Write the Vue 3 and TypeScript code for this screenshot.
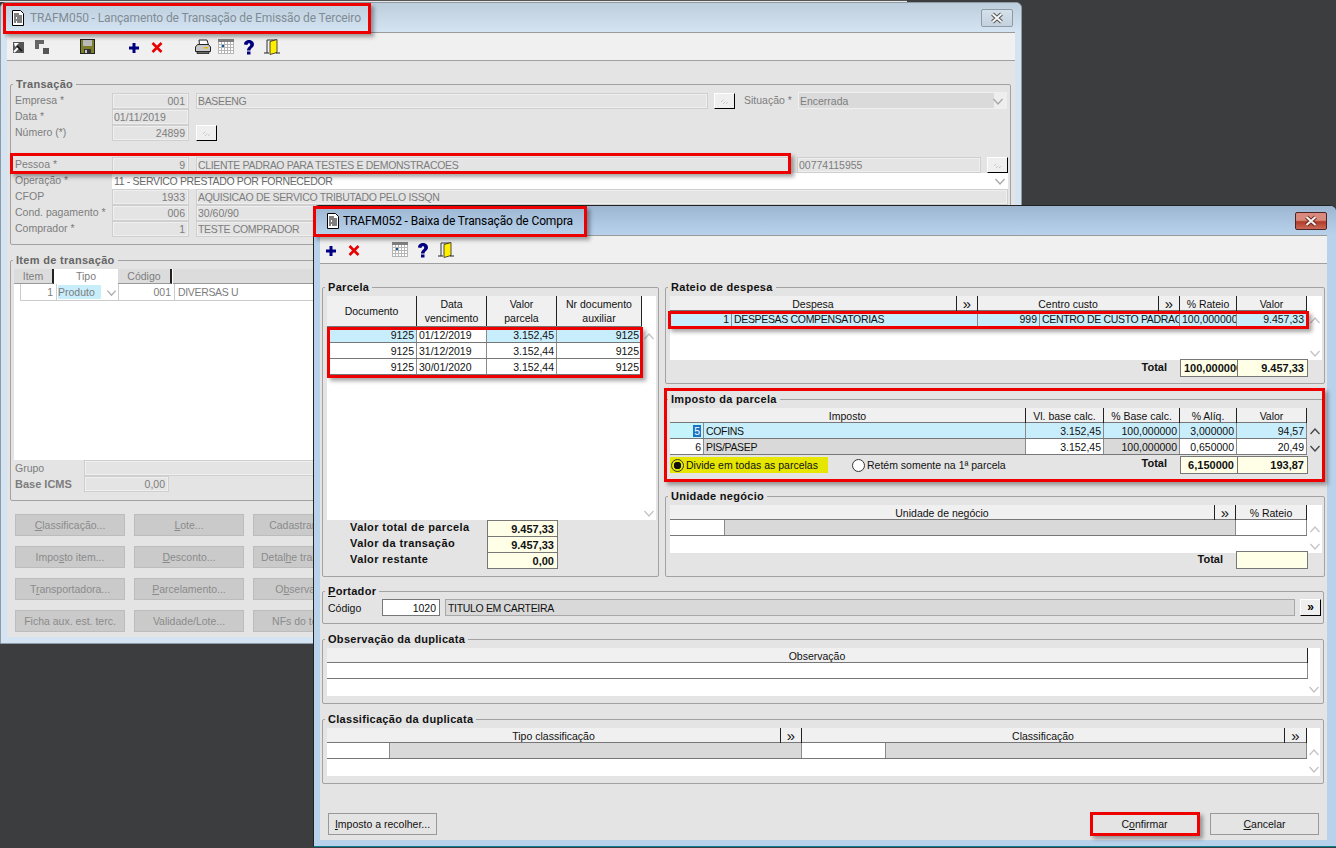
<script setup lang="ts">
interface Cell {
  t: string
  c?: string
}

interface DisabledBtn {
  pre: string
  key: string
  post: string
}

const cell = (t: string, c = ''): Cell => ({ t, c })

// janela de trás
const itemHeader = ['Item', 'Tipo', 'Código', 'Descrição']
const backButtons: DisabledBtn[] = [
  { pre: '', key: 'C', post: 'lassificação...' },
  { pre: '', key: 'L', post: 'ote...' },
  { pre: 'Cadastrar ', key: 'i', post: 'tem...' },
  { pre: 'Impo', key: 's', post: 'to item...' },
  { pre: '', key: 'D', post: 'esconto...' },
  { pre: 'Detal', key: 'h', post: 'e transação...' },
  { pre: 'T', key: 'r', post: 'ansportadora...' },
  { pre: '', key: 'P', post: 'arcelamento...' },
  { pre: 'O', key: 'b', post: 'servação...' },
  { pre: 'Ficha aux. est. terc.', key: '', post: '' },
  { pre: 'Validade/Lote...', key: '', post: '' },
  { pre: 'NFs do terceiro', key: '', post: '' }
]

// janela da frente
const parcelaHeader = [
  ['Documento'],
  ['Data', 'vencimento'],
  ['Valor', 'parcela'],
  ['Nr documento', 'auxiliar']
]
const parcelaRows: Cell[][] = [
  [cell('9125', 'r sel'), cell('01/12/2019', 'l'), cell('3.152,45', 'r sel'), cell('9125', 'r sel')],
  [cell('9125', 'r'), cell('31/12/2019', 'l'), cell('3.152,44', 'r'), cell('9125', 'r')],
  [cell('9125', 'r'), cell('30/01/2020', 'l'), cell('3.152,44', 'r'), cell('9125', 'r')]
]
const parcelaTotals = [
  ['Valor total de parcela', '9.457,33'],
  ['Valor da transação', '9.457,33'],
  ['Valor restante', '0,00']
]

const rateioRow: Cell[] = [
  cell('1', 'r sel'),
  cell('DESPESAS COMPENSATORIAS', 'l sel caps'),
  cell('999', 'r sel'),
  cell('CENTRO DE CUSTO PADRAO', 'l sel caps'),
  cell('100,000000', 'l sel'),
  cell('9.457,33', 'r sel')
]
const impostoRows: Cell[][] = [
  [
    cell('COFINS', 'l sel caps'),
    cell('3.152,45', 'r sel'),
    cell('100,000000', 'r sel'),
    cell('3,000000', 'r sel'),
    cell('94,57', 'r sel')
  ],
  [
    cell('PIS/PASEP', 'l ro caps'),
    cell('3.152,45', 'r'),
    cell('100,000000', 'r ro'),
    cell('0,650000', 'r'),
    cell('20,49', 'r')
  ]
]
</script>

<template>
  <div class="desktop">
    <svg class="defs" width="0" height="0">
      <symbol id="i-doc" viewBox="0 0 16 16">
        <path d="M2.5.5h8l3 3v12h-11z" fill="#fff" stroke="#000" />
        <path d="M4 4h5M4 6h8M4 8h2M7 8h5M4 10h8M4 12h2M7 12h5" stroke="#000" stroke-width="1.2" />
      </symbol>
      <symbol id="i-plus" viewBox="0 0 16 16">
        <path d="M6.5 4h3v3.500h3.500v3h-3.500v3.500h-3v-3.500h-3.500v-3h3.500z" fill="#000080" />
      </symbol>
      <symbol id="i-x" viewBox="0 0 16 16">
        <path d="M3.500 4l9 9M12.500 4l-9 9" stroke="#e80000" stroke-width="2.600" />
      </symbol>
      <symbol id="i-cal" viewBox="0 0 16 16">
        <rect width="16" height="15" fill="#fff" />
        <rect width="16" height="3" fill="#7f7f7f" />
        <path d="M.5 3v12M3.500 3v12M6.500 3v12M9.500 3v12M12.500 3v12M15.500 3v12M0 5.500h16M0 8.500h16M0 11.500h16M0 14.500h16" stroke="#b5b5b5" />
        <rect x="4" y="6" width="2" height="2" fill="#0a5a9c" />
      </symbol>
      <symbol id="i-help" viewBox="0 0 16 16">
        <path d="M3 5.500c0-6 10-6 10 0 0 3-3.500 3.500-3.500 6h-3.500c0-3.500 3.200-3.800 3.200-5.800 0-2-2.700-2-2.700.3z" fill="#000080" />
        <rect x="6" y="12.500" width="3.500" height="3" fill="#000080" />
      </symbol>
      <symbol id="i-door" viewBox="0 0 16 16">
        <path d="M3 14V1h9v13" fill="none" stroke="#333" />
        <path d="M6 2.500l7-2v13l-7 2z" fill="#ffee00" stroke="#222" stroke-width=".8" />
        <path d="M0 14h5M12 14h4" stroke="#222" />
      </symbol>
      <symbol id="i-print" viewBox="0 0 16 16">
        <path d="M4 1h8l1.500 5h-9z" fill="#fff" stroke="#222" />
        <path d="M.5 8l2-2.500h11l2 2.500v4.500h-15z" fill="#c8c8c8" stroke="#222" />
        <path d="M2 12.500h12v2h-12z" fill="#666" stroke="#222" stroke-width=".8" />
        <rect x="9" y="8" width="4" height="1.500" fill="#e0c000" />
      </symbol>
      <symbol id="i-save" viewBox="0 0 16 16">
        <rect x=".5" y=".5" width="14" height="14" fill="#7d7d2a" stroke="#222" />
        <rect x="3" y="1" width="9" height="6" fill="#b9b9b9" />
        <rect x="4" y="10" width="7" height="4.500" fill="#333" />
        <rect x="5" y="11" width="2" height="3" fill="#ccc" />
      </symbol>
      <symbol id="i-expand" viewBox="0 0 16 16">
        <rect x="2" y="3" width="11" height="11" fill="#555" />
        <path d="M3 13l4-4" stroke="#fff" stroke-width="2" />
        <path d="M3 4h5L4 8z" fill="#fff" />
        <path d="M6 7l5 5" stroke="#111" stroke-width="1.500" />
      </symbol>
      <symbol id="i-windows" viewBox="0 0 16 16">
        <rect x="1" y="1" width="9" height="9" fill="#666" />
        <rect x="5" y="5" width="5" height="5" fill="#eee" />
        <rect x="9" y="9" width="6" height="6" fill="#555" />
      </symbol>
      <symbol id="i-dots" viewBox="0 0 10 10">
        <path d="M1 6l3-3M3 8l3-3M6 8l2-2" stroke="#b5b5b5" stroke-dasharray="1 1" />
      </symbol>
      <symbol id="i-down" viewBox="0 0 12 12">
        <path d="M1.500 4l4.500 5 4.500-5" fill="none" stroke="currentColor" stroke-width="1.300" />
      </symbol>
      <symbol id="i-up" viewBox="0 0 12 12">
        <path d="M1.500 8l4.500-5 4.500 5" fill="none" stroke="currentColor" stroke-width="1.300" />
      </symbol>
      <symbol id="i-close" viewBox="0 0 14 12">
        <path d="M2.500 2l9 8M11.500 2l-9 8" stroke="currentColor" stroke-width="4" />
        <path d="M2.500 2l9 8M11.500 2l-9 8" stroke="#f6f6f6" stroke-width="2" />
      </symbol>
    </svg>

    <div class="topline"></div>

    <!-- TRAFM050 -->
    <section class="window back">
      <header class="titlebar">
        <svg class="doc"><use href="#i-doc" /></svg>
        <span class="title">TRAFM050 - Lançamento de Transação de Emissão de Terceiro</span>
        <button class="close"><svg><use href="#i-close" /></svg></button>
      </header>
      <div class="win-body">
        <div class="toolbar">
          <svg><use href="#i-expand" /></svg>
          <svg><use href="#i-windows" /></svg>
          <i class="slot"></i>
          <svg><use href="#i-save" /></svg>
          <i class="slot"></i>
          <svg><use href="#i-plus" /></svg>
          <svg><use href="#i-x" /></svg>
          <i class="slot"></i>
          <svg><use href="#i-print" /></svg>
          <svg><use href="#i-cal" /></svg>
          <svg><use href="#i-help" /></svg>
          <svg><use href="#i-door" /></svg>
        </div>
        <div class="back-client">
          <fieldset class="group g-transacao">
            <legend>Transação</legend>
            <div class="frow">
              <label>Empresa *</label>
              <span class="fld code">001</span>
              <span class="fld txt w-empresa caps">BASEENG</span>
              <button class="dots"><svg><use href="#i-dots" /></svg></button>
              <label class="lb-situacao">Situação *</label>
              <span class="combo situacao">Encerrada<svg><use href="#i-down" /></svg></span>
            </div>
            <div class="frow">
              <label>Data *</label>
              <span class="fld code left">01/11/2019</span>
            </div>
            <div class="frow">
              <label>Número (*)</label>
              <span class="fld code">24899</span>
              <button class="dots wide-gap"><svg><use href="#i-dots" /></svg></button>
            </div>
            <div class="frow spaced">
              <label>Pessoa *</label>
              <span class="fld code">9</span>
              <span class="fld txt w-pessoa caps">CLIENTE PADRAO PARA TESTES E DEMONSTRACOES</span>
              <span class="fld txt w-cpf">00774115955</span>
              <button class="dots"><svg><use href="#i-dots" /></svg></button>
            </div>
            <div class="frow">
              <label>Operação *</label>
              <span class="combo operacao caps">11 - SERVICO PRESTADO POR FORNECEDOR<svg><use href="#i-down" /></svg></span>
            </div>
            <div class="frow">
              <label>CFOP</label>
              <span class="fld code">1933</span>
              <span class="fld txt w-long caps">AQUISICAO DE SERVICO TRIBUTADO PELO ISSQN</span>
            </div>
            <div class="frow">
              <label>Cond. pagamento *</label>
              <span class="fld code">006</span>
              <span class="fld txt w-long">30/60/90</span>
            </div>
            <div class="frow">
              <label>Comprador *</label>
              <span class="fld code">1</span>
              <span class="fld txt w-long caps">TESTE COMPRADOR</span>
            </div>
          </fieldset>

          <fieldset class="group g-item">
            <legend>Item de transação</legend>
            <div class="item-table">
              <div class="item-head">
                <span v-for="h in itemHeader" :key="h" :class="{ 'tipo-h': h === 'Tipo' }">{{ h }}</span>
              </div>
              <div class="item-row">
                <span class="r">1</span>
                <span class="tipo"><em>Produto</em><svg><use href="#i-down" /></svg></span>
                <span class="r">001</span>
                <span class="l caps">DIVERSAS U</span>
              </div>
            </div>
            <div class="frow short">
              <label>Grupo</label>
              <span class="fld w-grupo"></span>
            </div>
            <div class="frow short">
              <label class="strong">Base ICMS</label>
              <span class="fld base">0,00</span>
            </div>
          </fieldset>

          <div class="back-buttons">
            <button v-for="b in backButtons" :key="b.pre + b.post" class="off-btn">{{ b.pre }}<u>{{ b.key }}</u>{{ b.post }}</button>
          </div>
        </div>
      </div>
    </section>

    <!-- TRAFM052 -->
    <section class="window front">
      <header class="titlebar">
        <svg class="doc"><use href="#i-doc" /></svg>
        <span class="title">TRAFM052 - Baixa de Transação de Compra</span>
        <button class="close"><svg><use href="#i-close" /></svg></button>
      </header>
      <div class="win-body">
        <div class="toolbar">
          <svg><use href="#i-plus" /></svg>
          <svg><use href="#i-x" /></svg>
          <i class="slot"></i>
          <svg><use href="#i-cal" /></svg>
          <svg><use href="#i-help" /></svg>
          <svg><use href="#i-door" /></svg>
        </div>
        <div class="front-client">
          <div class="columns">
            <fieldset class="group g-parcela">
              <legend>Parcela</legend>
              <div class="grid-wrap parcela-wrap">
                <div>
                  <div class="head cols-parcela tall">
                    <span v-for="h in parcelaHeader" :key="h[0]">
                      <b v-for="line in h" :key="line">{{ line }}</b>
                    </span>
                  </div>
                  <div v-for="(row, i) in parcelaRows" :key="i" class="row cols-parcela">
                    <span v-for="(c, j) in row" :key="j" :class="c.c">{{ c.t }}</span>
                  </div>
                </div>
                <div class="scroll tall-scroll">
                  <svg><use href="#i-up" /></svg>
                  <svg><use href="#i-down" /></svg>
                </div>
              </div>
              <div v-for="t in parcelaTotals" :key="t[0]" class="sum-row">
                <span>{{ t[0] }}</span>
                <span class="total-box">{{ t[1] }}</span>
              </div>
            </fieldset>

            <div class="right-col">
              <fieldset class="group g-rateio">
                <legend>Rateio de despesa</legend>
                <div class="grid-wrap rateio-wrap">
                  <div>
                    <div class="head cols-rateio-h">
                      <span>Despesa</span><span class="ext">»</span><span>Centro custo</span><span class="ext">»</span><span>% Rateio</span><span>Valor</span>
                    </div>
                    <div class="row cols-rateio">
                      <span v-for="(c, j) in rateioRow" :key="j" :class="c.c">{{ c.t }}</span>
                    </div>
                  </div>
                  <div class="scroll body-scroll">
                    <svg><use href="#i-up" /></svg>
                    <svg><use href="#i-down" /></svg>
                  </div>
                </div>
                <div class="total-row">
                  <strong>Total</strong>
                  <span class="total-box pct">100,000000</span>
                  <span class="total-box val">9.457,33</span>
                </div>
              </fieldset>

              <fieldset class="group g-imposto">
                <legend>Imposto da parcela</legend>
                <div class="grid-wrap imposto-wrap">
                  <div>
                    <div class="head cols-imposto-h">
                      <span>Imposto</span><span>Vl. base calc.</span><span>% Base calc.</span><span>% Alíq.</span><span>Valor</span>
                    </div>
                    <div class="row cols-imposto">
                      <span class="r editing"><mark>5</mark></span>
                      <span v-for="(c, j) in impostoRows[0]" :key="j" :class="c.c">{{ c.t }}</span>
                    </div>
                    <div class="row cols-imposto">
                      <span class="r">6</span>
                      <span v-for="(c, j) in impostoRows[1]" :key="j" :class="c.c">{{ c.t }}</span>
                    </div>
                  </div>
                  <div class="scroll active-scroll">
                    <svg><use href="#i-up" /></svg>
                    <svg><use href="#i-down" /></svg>
                  </div>
                </div>
                <div class="total-row imposto-total">
                  <label class="radio on"><i></i>Divide em todas as parcelas</label>
                  <label class="radio"><i></i>Retém somente na 1ª parcela</label>
                  <strong>Total</strong>
                  <span class="total-box pct">6,150000</span>
                  <span class="total-box val">193,87</span>
                </div>
              </fieldset>

              <fieldset class="group g-unidade">
                <legend>Unidade negócio</legend>
                <div class="grid-wrap unidade-wrap">
                  <div>
                    <div class="head cols-unidade-h">
                      <span>Unidade de negócio</span><span class="ext">»</span><span>% Rateio</span>
                    </div>
                    <div class="row cols-unidade">
                      <span></span><span class="ro"></span><span></span>
                    </div>
                  </div>
                  <div class="scroll body-scroll">
                    <svg><use href="#i-up" /></svg>
                    <svg><use href="#i-down" /></svg>
                  </div>
                </div>
                <div class="total-row unidade-total">
                  <strong>Total</strong>
                  <span class="total-box wide"></span>
                </div>
              </fieldset>
            </div>
          </div>

          <fieldset class="group g-portador">
            <legend><u>P</u>ortador</legend>
            <div class="portador-row">
              <label>Código</label>
              <span class="input">1020</span>
              <span class="ro-field caps">TITULO EM CARTEIRA</span>
              <button class="more">»</button>
            </div>
          </fieldset>

          <fieldset class="group g-obs">
            <legend>Observação da duplicata</legend>
            <div class="grid-wrap full-wrap">
              <div>
                <div class="head cols-obs"><span>Observação</span></div>
                <div class="row cols-obs"><span></span></div>
              </div>
              <div class="scroll down-only">
                <svg><use href="#i-down" /></svg>
              </div>
            </div>
          </fieldset>

          <fieldset class="group g-class">
            <legend>Classificação da duplicata</legend>
            <div class="grid-wrap full-wrap">
              <div>
                <div class="head cols-class-h">
                  <span>Tipo classificação</span><span class="ext">»</span><span>Classificação</span><span class="ext">»</span>
                </div>
                <div class="row cols-class">
                  <span></span><span class="ro"></span><span></span><span class="ro"></span>
                </div>
              </div>
              <div class="scroll body-scroll">
                <svg><use href="#i-up" /></svg>
                <svg><use href="#i-down" /></svg>
              </div>
            </div>
          </fieldset>

          <div class="actions">
            <button class="action"><u>I</u>mposto a recolher...</button>
            <i class="fill"></i>
            <button class="action">C<u>o</u>nfirmar</button>
            <button class="action"><u>C</u>ancelar</button>
          </div>
        </div>
      </div>
    </section>

    <!-- marcações vermelhas -->
    <div class="mark m-back-title"></div>
    <div class="mark m-pessoa"></div>
    <div class="mark m-front-title"></div>
    <div class="mark m-parcelas"></div>
    <div class="mark m-rateio"></div>
    <div class="mark m-imposto"></div>
    <div class="mark m-confirmar"></div>
  </div>
</template>

<style>
html,
body {
  margin: 0;
  background: #3c3d3f;
}
</style>

<style scoped>
* {
  box-sizing: border-box;
}

.desktop {
  position: relative;
  width: 1336px;
  height: 848px;
  overflow: hidden;
  background: #3c3d3f;
  font: 10.5px/14px "Liberation Sans", Arial, sans-serif;
  color: #111;
}

.defs {
  position: absolute;
}

.topline {
  width: 907px;
  height: 2px;
  background: #e8e8e8;
  border-top: 1px solid #555;
}

button {
  font: inherit;
  padding: 0;
}

.caps {
  letter-spacing: -.33px;
}

.window {
  position: absolute;
  display: flex;
  flex-direction: column;
  border-radius: 6px 6px 0 0;
}

.back {
  left: 0;
  top: 2px;
  width: 1022px;
  height: 642px;
  background: #d5e4f3;
  border: 1px solid #8f9aa5;
  color: #7d7d7d;
}

.front {
  left: 313px;
  top: 205px;
  width: 1023px;
  height: 642px;
  background: #b9d2ec;
  border: 1px solid #222;
  border-right: 0;
  border-bottom-color: #0f7d92;
}

.titlebar {
  display: flex;
  flex: none;
  align-items: center;
  height: 29px;
  padding-left: 9px;
  border-radius: 6px 6px 0 0;
  background: linear-gradient(#bccddc, #d5e4f3);
}

.front .titlebar {
  padding-left: 11px;
  background: linear-gradient(#9cb6d2, #b9d2ec);
}

.doc {
  width: 16px;
  height: 16px;
}

.title {
  margin-left: 4px;
  font: 12px/16px Roboto, sans-serif;
  letter-spacing: -.12px;
  color: #808c94;
  white-space: nowrap;
}

.front .title {
  margin-left: 2px;
  color: #000;
}

.close {
  display: flex;
  align-items: center;
  justify-content: center;
  width: 32px;
  height: 18px;
  margin-left: auto;
  margin-right: 8px;
  border: 1px solid #8f9aa5;
  border-radius: 2px;
  background: linear-gradient(#d4e0ea, #c4d2de);
  color: #555;
}

.close svg {
  width: 14px;
  height: 12px;
}

.front .close {
  margin-right: 9px;
  border-color: #4e2424;
  background: linear-gradient(#d98a7c 0 45%, #b03a28 55%, #c96a58);
  color: #6b2a20;
}

.win-body {
  display: flex;
  flex: 1;
  flex-direction: column;
  min-height: 0;
  margin: 0 6px 6px 6px;
  border-top: 1px solid #9a9a9a;
  background: #e4e4e4;
}

.front .win-body {
  margin-right: 9px;
}

.toolbar {
  display: flex;
  flex: none;
  align-items: center;
  gap: 7px;
  height: 28px;
  padding-left: 4px;
  background: #f0f0f0;
  border-bottom: 1px solid #a0a0a0;
}

.front .toolbar {
  padding-left: 3px;
}

.toolbar svg {
  width: 16px;
  height: 16px;
  flex: none;
}

.slot {
  width: 16px;
  flex: none;
}

/* grupos */
.group {
  --pl: 4px;
  margin: 0;
  padding: 2px 0 0 var(--pl);
  min-width: 0;
  border: 1px solid #a2a2a2;
  border-radius: 2px;
}

legend {
  height: 13px;
  margin-left: calc(2px - var(--pl));
  padding: 0 3px;
  font-size: 11px;
  font-weight: bold;
  line-height: 13px;
  letter-spacing: .3px;
  color: #111;
}

/* janela de trás */
.back-client {
  padding: 17px 4px 0 3px;
  overflow: hidden;
  flex: 1;
}

.back legend {
  color: #666;
}

.g-transacao {
  width: 1001px;
  height: 167px;
}

.g-item {
  --pl: 3px;
  width: 1001px;
  height: 247px;
  margin-top: 9px;
}

.frow {
  display: flex;
  height: 16px;
}

.frow.spaced {
  margin-top: 16px;
}

.frow > label {
  width: 97px;
  flex: none;
  line-height: 14px;
}

.fld {
  display: block;
  height: 16px;
  padding: 0 3px 0 1px;
  border: 1px solid #cfcfcf;
  box-shadow: inset 0 0 0 1px #efefef;
  line-height: 15px;
  white-space: nowrap;
  overflow: hidden;
}

.code {
  width: 77px;
  text-align: right;
}

.code.left {
  text-align: left;
}

.txt {
  margin-left: 7px;
}

.w-empresa {
  width: 512px;
}

.w-pessoa {
  width: 594px;
}

.w-cpf {
  width: 184px;
}

.w-long {
  width: 812px;
}

.dots {
  width: 21px;
  height: 16px;
  margin-left: 6px;
  background: #efefef;
  border: 1px solid;
  border-color: #fff #000 #000 #fff;
}

.dots.wide-gap {
  margin-left: 7px;
}

.dots svg {
  display: block;
  width: 10px;
  height: 10px;
  margin: 2px auto;
}

.frow > .lb-situacao {
  width: auto;
  margin-left: 9px;
}

.combo {
  display: flex;
  justify-content: space-between;
  align-items: center;
  height: 17px;
  padding: 0 2px 0 1px;
  color: #7d7d7d;
}

.combo svg {
  width: 12px;
  height: 12px;
  color: #a8a8a8;
}

.situacao {
  width: 209px;
  margin: -1px 0 0 6px;
  background: linear-gradient(to right, #dadada 195px, #eee 195px);
  border: 1px solid #efefef;
}

.operacao {
  width: 896px;
  height: 16px;
  padding-left: 2px;
  background: #fff;
  color: #6a6a6a;
}

.item-table {
  width: 990px;
  height: 191px;
  background: #fff;
}

.item-head {
  display: grid;
  grid-template-columns: 41px 63px 55px 1fr;
  height: 15px;
  background: #fff;
}

.item-head span {
  text-align: center;
  background: #dcdcdc;
  border-right: 2px solid #222;
  border-bottom: 1px solid #999;
  margin-right: 1px;
  line-height: 14px;
}

.item-head .tipo-h {
  background: #fff;
  border: 0;
}

.item-row {
  display: grid;
  grid-template-columns: 36px 62px 56px 1fr;
  height: 17px;
  margin-left: 6px;
  border-bottom: 1px solid #ccc;
  border-left: 1px solid #ccc;
}

.item-row span {
  padding: 1px 3px 0;
  border-right: 1px solid #ccc;
}

.item-row .tipo {
  display: flex;
  align-items: center;
  padding: 0 0 0 1px;
}

.tipo em {
  width: 43px;
  height: 14px;
  font-style: normal;
  background: #c8eefc;
}

.tipo svg {
  width: 11px;
  height: 11px;
  margin-left: 5px;
  color: #aaa;
}

.frow.short {
  height: 16px;
  padding-left: 1px;
}

.frow.short > label {
  width: 69px;
  padding-top: 1px;
}

.frow.short > .strong {
  font-size: 11px;
  font-weight: bold;
}

.w-grupo {
  width: 900px;
}

.base {
  width: 85px;
  text-align: right;
}

.back-buttons {
  display: grid;
  grid-template-columns: repeat(3, 110px);
  gap: 10px 9px;
  margin: 13px 0 0 5px;
}

.off-btn {
  height: 22px;
  background: #cacaca;
  border: 1px solid #bcbcbc;
  color: #8a8a8a;
  white-space: nowrap;
  overflow: hidden;
}

/* janela da frente */
.front-client {
  flex: 1;
  padding: 17px 0 0 2px;
}

.columns {
  display: flex;
  gap: 6px;
}

.right-col {
  display: flex;
  flex-direction: column;
  gap: 9px;
}

.g-parcela {
  width: 337px;
  height: 296px;
}

.right-col .group {
  width: 660px;
}

.g-rateio {
  height: 103px;
}

.g-imposto {
  height: 88px;
}

.g-unidade {
  height: 87px;
}

.grid-wrap {
  display: flex;
  background: #fff;
}

.parcela-wrap {
  width: 329px;
  height: 224px;
}

.rateio-wrap {
  width: 652px;
  height: 64px;
}

.imposto-wrap {
  width: 652px;
  height: 48px;
  background: transparent;
}

.unidade-wrap {
  width: 652px;
  height: 48px;
}

.full-wrap {
  width: 993px;
  height: 48px;
}

.grid-wrap > div:first-child {
  flex: none;
}

.head {
  display: grid;
  height: 15px;
  background: #f0f0f0;
  border-bottom: 1px solid #777;
}

.head > span {
  display: flex;
  flex-direction: column;
  align-items: center;
  justify-content: center;
  padding-top: 1px;
  border-right: 1px solid #222;
  line-height: 14px;
  white-space: nowrap;
}

.head > .ext {
  padding-top: 0;
  font-size: 15px;
  line-height: 12px;
}

.head b {
  font-weight: normal;
}

.head.tall {
  height: 31px;
}

.head.tall > span {
  padding-top: 0;
}

.row {
  display: grid;
  height: 16px;
  background: #fff;
  border-bottom: 1px solid #777;
}

.row > span {
  padding: 2px 2px 0 3px;
  border-right: 1px solid #8a8a8a;
  white-space: nowrap;
  overflow: hidden;
  line-height: 13px;
}

.row > .l {
  padding-left: 2px;
  text-align: left;
}

.r {
  text-align: right;
}

.row > .sel {
  background: #c8eefc;
}

.row > .ro {
  background: #d9d9d9;
}

.row > .editing {
  background: #c6f4fb;
}

mark {
  background: #1c74c8;
  color: #fff;
  padding: 0 1px;
}

.cols-parcela {
  grid-template-columns: 90px 70px 70px 85px;
  width: 315px;
}

.cols-rateio-h {
  grid-template-columns: 287px 21px 181px 21px 57px 70px;
  width: 637px;
}

.cols-rateio {
  grid-template-columns: 62px 246px 62px 140px 57px 70px;
  width: 637px;
}

.cols-imposto-h {
  grid-template-columns: 356px 78px 76px 57px 70px;
  width: 637px;
}

.cols-imposto {
  grid-template-columns: 34px 322px 78px 76px 57px 70px;
  width: 637px;
}

.cols-unidade-h {
  grid-template-columns: 545px 21px 71px;
  width: 637px;
}

.cols-unidade {
  grid-template-columns: 55px 511px 71px;
  width: 637px;
}

.cols-obs {
  grid-template-columns: 981px;
  width: 981px;
}

.cols-class-h {
  grid-template-columns: 454px 21px 483px 22px;
  width: 980px;
}

.cols-class {
  grid-template-columns: 63px 412px 84px 421px;
  width: 980px;
}

.scroll {
  display: flex;
  flex-direction: column;
  flex: 1;
  align-items: center;
  justify-content: space-between;
  color: #c4c4c4;
  padding-bottom: 1px;
}

.scroll svg {
  width: 12px;
  height: 12px;
}

.tall-scroll {
  padding-top: 35px;
}

.body-scroll {
  padding-top: 19px;
}

.active-scroll {
  padding-top: 18px;
  justify-content: flex-start;
  gap: 4px;
  color: #444;
}

.down-only {
  justify-content: flex-end;
}

.sum-row {
  display: grid;
  grid-template-columns: 160px 71px;
  height: 16px;
  font-size: 11px;
  font-weight: bold;
  letter-spacing: .4px;
}

.sum-row:first-of-type {
  margin-top: -1px;
}

.sum-row > span:first-child {
  padding-left: 23px;
  line-height: 14px;
}

.total-box {
  display: block;
  height: 17px;
  padding: 1px 3px 0;
  border: 1px solid #777;
  background: #ffffe8;
  font-size: 11px;
  font-weight: bold;
  letter-spacing: 0;
  text-align: right;
  white-space: nowrap;
  overflow: hidden;
}

.sum-row .total-box {
  margin-bottom: -1px;
}

.total-row {
  display: flex;
  align-items: center;
  justify-content: flex-end;
  width: 638px;
  height: 18px;
  margin-top: -1px;
}

.total-row strong {
  margin: 0 13px 2px 0;
  font-size: 11px;
}

.total-box.pct {
  width: 58px;
  height: 18px;
}

.total-box.val {
  width: 71px;
  height: 18px;
  margin-left: -1px;
}

.total-box.wide {
  width: 72px;
  height: 18px;
}

.imposto-total {
  height: 16px;
  margin-top: 1px;
  justify-content: flex-start;
}

.imposto-total strong {
  margin-left: auto;
  margin-bottom: 4px;
}

.radio {
  display: flex;
  align-items: center;
  height: 16px;
  white-space: nowrap;
}

.radio i {
  width: 13px;
  height: 13px;
  margin-right: 2px;
  border: 1px solid #333;
  border-radius: 50%;
  background: #fff;
}

.radio.on {
  width: 158px;
  padding-left: 1px;
  background: #e6e600;
}

.radio.on i {
  background: radial-gradient(circle, #111 0 3.5px, #e6e600 4px);
}

.radio:not(.on) {
  margin-left: 24px;
}

.unidade-total {
  margin-top: -2px;
}

.g-portador {
  --pl: 5px;
  width: 1002px;
  height: 39px;
  margin-top: 8px;
  padding-top: 1px;
}

.portador-row {
  display: flex;
  align-items: center;
  height: 17px;
}

.portador-row label {
  width: 54px;
}

.input {
  width: 58px;
  height: 17px;
  padding: 1px 3px 0;
  background: #fff;
  border: 1px solid #777;
  text-align: right;
}

.ro-field {
  width: 850px;
  height: 17px;
  margin-left: 5px;
  padding: 1px 3px 0 2px;
  background: #d9d9d9;
  border: 1px solid #a8a8a8;
}

.more {
  width: 21px;
  height: 17px;
  margin-left: 5px;
  background: #efefef;
  border: 1px solid;
  border-color: #fff #000 #000 #fff;
  font-weight: bold;
  font-size: 12px;
  line-height: 13px;
}

.g-obs,
.g-class {
  width: 1002px;
  height: 71px;
  margin-top: 9px;
}

.actions {
  display: flex;
  width: 991px;
  margin: 29px 0 0 6px;
  gap: 11px;
}

.fill {
  flex: 1;
}

.action {
  width: 109px;
  height: 22px;
  background: #e4e4e4;
  border: 1px solid #999;
  color: #111;
}

/* marcações */
.mark {
  position: absolute;
  border: 3px solid #ee0000;
  box-shadow: 3px 3px 4px rgba(0, 0, 0, .35);
}

.m-back-title {
  left: 3px;
  top: 3px;
  width: 368px;
  height: 31px;
}

.m-pessoa {
  left: 10px;
  top: 153px;
  width: 781px;
  height: 21px;
}

.m-front-title {
  left: 313px;
  top: 206px;
  width: 274px;
  height: 31px;
}

.m-parcelas {
  left: 327px;
  top: 327px;
  width: 316px;
  height: 51px;
}

.m-rateio {
  left: 668px;
  top: 311px;
  width: 641px;
  height: 18px;
}

.m-imposto {
  left: 664px;
  top: 388px;
  width: 661px;
  height: 94px;
}

.m-confirmar {
  left: 1090px;
  top: 812px;
  width: 110px;
  height: 24px;
}
</style>
